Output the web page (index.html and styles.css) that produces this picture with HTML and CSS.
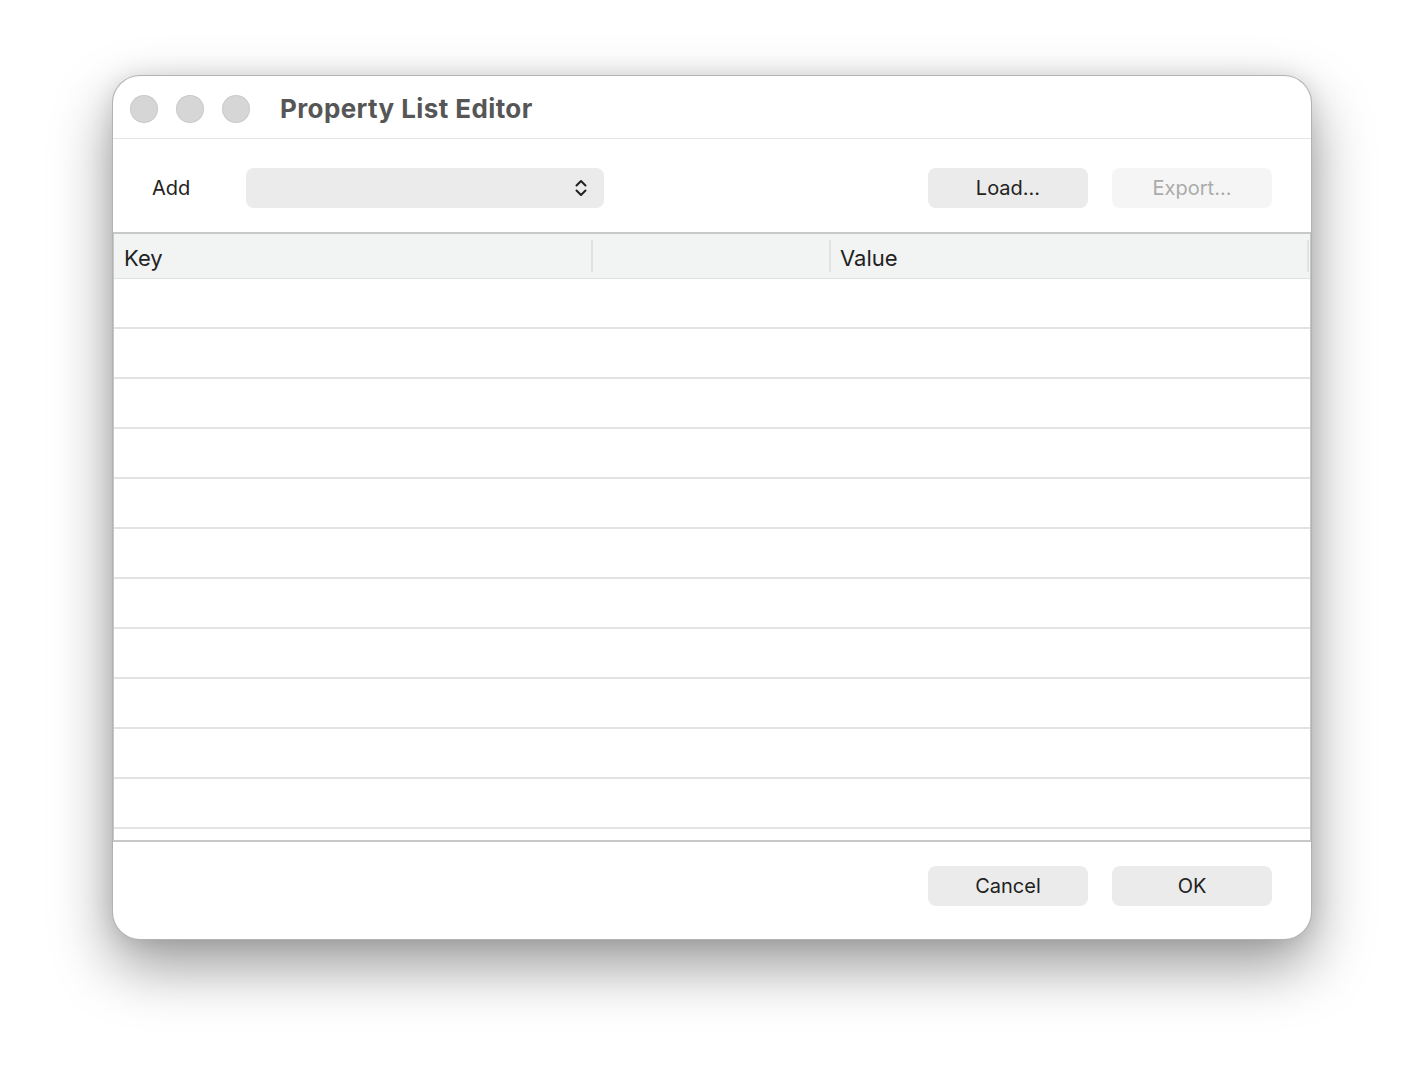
FILE: index.html
```html
<!DOCTYPE html>
<html>
<head>
<meta charset="utf-8">
<link rel="stylesheet" href="styles.css">
</head>
<body>
<div class="window">
  <div class="titlebar">
    <div class="lights">
      <span class="light"></span><span class="light"></span><span class="light"></span>
    </div>
    <div class="title">Property List Editor</div>
  </div>
  <div class="toolbar">
    <span class="add-label">Add</span>
    <div class="popup">
      <svg class="chev" width="14" height="20" viewBox="0 0 14 20"><path d="M2.5 7.5 L7 3 L11.5 7.5 M2.5 12.5 L7 17 L11.5 12.5" fill="none" stroke="#222" stroke-width="2" stroke-linecap="round" stroke-linejoin="round"/></svg>
    </div>
    <div class="spacer"></div>
    <button class="btn">Load...</button>
    <button class="btn disabled">Export...</button>
  </div>
  <div class="table">
    <div class="thead">
      <div class="th th-key">Key</div>
      <div class="th th-mid"></div>
      <div class="th th-val">Value</div>
      <div class="th th-end"></div>
    </div>
    <div class="tbody">
      <div class="row"></div><div class="row"></div><div class="row"></div>
      <div class="row"></div><div class="row"></div><div class="row"></div>
      <div class="row"></div><div class="row"></div><div class="row"></div>
      <div class="row"></div><div class="row"></div>
      <div class="row partial"></div>
    </div>
  </div>
  <div class="footer">
    <button class="btn">Cancel</button>
    <button class="btn">OK</button>
  </div>
</div>
</body>
</html>
```

FILE: styles.css
```css
html, body {
  margin: 0;
  padding: 0;
  background: #ffffff;
}
body {
  padding: 75px 0 0 112px;
  min-height: 1088px;
  box-sizing: border-box;
  font-family: "Inter", "Liberation Sans", sans-serif;
  color: #222;
}
.window {
  width: 1200px;
  height: 865px;
  box-sizing: border-box;
  background: #fff;
  border-radius: 28px;
  border: 1px solid rgba(0,0,0,0.3);
  box-shadow: 0 26px 60px rgba(0,0,0,0.4), 0 0 22px rgba(0,0,0,0.1);
  overflow: hidden;
  display: flex;
  flex-direction: column;
}
.titlebar {
  height: 63px;
  flex: none;
  box-sizing: border-box;
  border-bottom: 1px solid #e4e4e4;
  display: flex;
  align-items: center;
  padding-left: 17px;
  padding-top: 3px;
}
.lights {
  display: flex;
  gap: 18px;
}
.light {
  width: 28px;
  height: 28px;
  border-radius: 50%;
  background: #d6d6d6;
  box-shadow: inset 0 0 0 1px rgba(0,0,0,0.06);
}
.title {
  margin-left: 30px;
  font-size: 26px;
  font-weight: 700;
  color: #565656;
  letter-spacing: 0.4px;
}
.toolbar {
  height: 94px;
  flex: none;
  display: flex;
  align-items: center;
  padding: 4px 39px 0 38px;
  box-sizing: border-box;
}
.add-label {
  font-size: 20px;
  width: 94px;
  margin-left: 1px;
}
.popup {
  width: 358px;
  height: 40px;
  border-radius: 8px;
  background: #ebebeb;
  display: flex;
  align-items: center;
  justify-content: flex-end;
  padding-right: 16px;
  box-sizing: border-box;
}
.spacer { flex: 1; }
.btn {
  width: 160px;
  height: 40px;
  border: none;
  border-radius: 8px;
  background: #ebebeb;
  font-family: inherit;
  font-size: 20px;
  color: #222;
  padding: 0;
  margin-left: 24px;
}
.btn.disabled {
  background: #f5f5f5;
  color: #ababab;
}
.table {
  flex: none;
  height: 610px;
  box-sizing: border-box;
  border: 2px solid #c8c8c8;
  margin: -1px -1px 0;
  display: flex;
  flex-direction: column;
  overflow: hidden;
}
.thead {
  height: 45px;
  flex: none;
  box-sizing: border-box;
  background: #f2f3f3;
  border-bottom: 1px solid #e0e0e0;
  display: flex;
  align-items: center;
}
.th {
  height: 100%;
  box-sizing: border-box;
  display: flex;
  align-items: center;
  padding-top: 3px;
  font-size: 22px;
  color: #222;
  position: relative;
}
.th-key { width: 477px; padding-left: 10px; }
.th-mid { width: 238px; }
.th-val { width: 478px; padding-left: 11px; }
.th-end { flex: 1; }
.th-mid::before, .th-val::before, .th-end::before {
  content: "";
  position: absolute;
  left: 0;
  top: 6px;
  bottom: 6px;
  width: 2px;
  background: #e2e2e2;
}
.tbody {
  flex: 1;
  overflow: hidden;
}
.row {
  height: 50px;
  box-sizing: border-box;
  border-bottom: 2px solid #e3e3e3;
}
.footer {
  flex: 1;
  display: flex;
  align-items: flex-start;
  justify-content: flex-end;
  padding: 24px 39px 0 0;
}
```
